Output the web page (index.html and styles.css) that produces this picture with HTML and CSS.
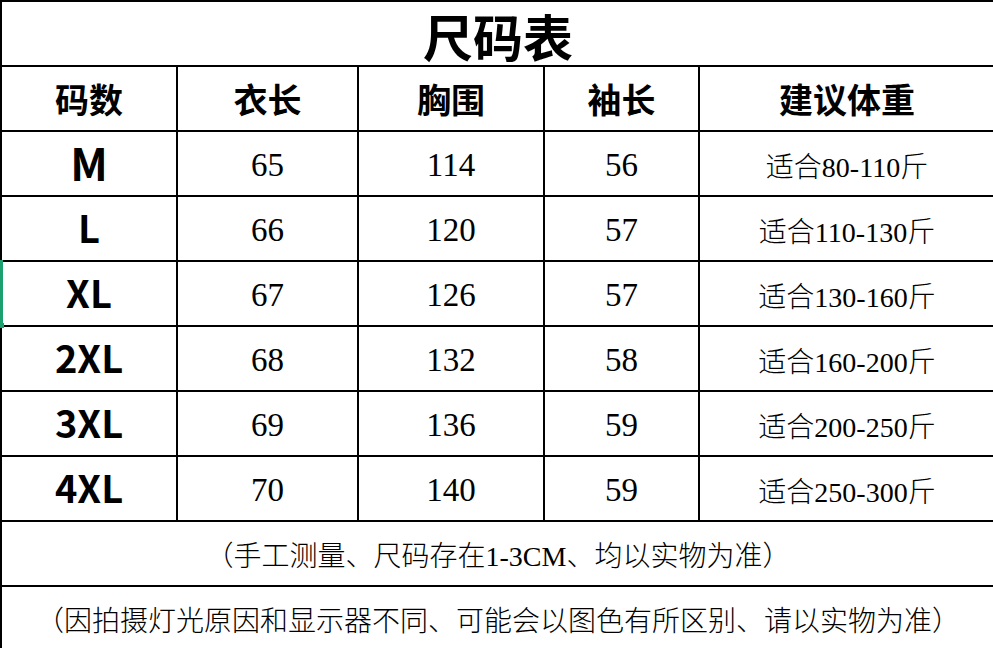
FILE: index.html
```html
<!DOCTYPE html>
<html lang="zh">
<head>
<meta charset="utf-8">
<title>尺码表</title>
<link rel="stylesheet" href="styles.css">
</head>
<body>
<div class="sheet">
  <div class="chart">
    <div class="cell title span">尺码表</div>

    <div class="cell head">码数</div>
    <div class="cell head">衣长</div>
    <div class="cell head">胸围</div>
    <div class="cell head">袖长</div>
    <div class="cell head">建议体重</div>

    <div class="cell size big">M</div>
    <div class="cell num">65</div>
    <div class="cell num">114</div>
    <div class="cell num">56</div>
    <div class="cell weight">适合80-110斤</div>

    <div class="cell size">L</div>
    <div class="cell num">66</div>
    <div class="cell num">120</div>
    <div class="cell num">57</div>
    <div class="cell weight">适合110-130斤</div>

    <div class="cell size">XL</div>
    <div class="cell num">67</div>
    <div class="cell num">126</div>
    <div class="cell num">57</div>
    <div class="cell weight">适合130-160斤</div>

    <div class="cell size">2XL</div>
    <div class="cell num">68</div>
    <div class="cell num">132</div>
    <div class="cell num">58</div>
    <div class="cell weight">适合160-200斤</div>

    <div class="cell size">3XL</div>
    <div class="cell num">69</div>
    <div class="cell num">136</div>
    <div class="cell num">59</div>
    <div class="cell weight">适合200-250斤</div>

    <div class="cell size">4XL</div>
    <div class="cell num">70</div>
    <div class="cell num">140</div>
    <div class="cell num">59</div>
    <div class="cell weight">适合250-300斤</div>

    <div class="cell note span">（手工测量、尺码存在1-3CM、均以实物为准）</div>
    <div class="cell note span">（因拍摄灯光原因和显示器不同、可能会以图色有所区别、请以实物为准）</div>
  </div>
  <div class="selection"><span class="handle"></span></div>
</div>
</body>
</html>
```

FILE: styles.css
```css
html, body {
  margin: 0;
  padding: 0;
  background: #ffffff;
  overflow: hidden;
}

.sheet {
  position: relative;
  width: 993px;
  height: 648px;
  overflow: hidden;
}

.chart {
  display: grid;
  grid-template-columns: 176px 181px 186px 155px 296px;
  grid-auto-rows: 65px;
  width: 996px;
  border-top: 2px solid #000;
  border-left: 2px solid #000;
  box-sizing: border-box;
  color: #000;
}

.cell {
  box-sizing: border-box;
  border-right: 2px solid #000;
  border-bottom: 2px solid #000;
  display: flex;
  align-items: center;
  justify-content: center;
  white-space: nowrap;
}

.span {
  grid-column: 1 / -1;
}

.title {
  font-family: "Noto Sans CJK SC", sans-serif;
  font-weight: 700;
  font-size: 50px;
  padding-top: 2px;
}

.head {
  font-family: "Noto Sans CJK SC", sans-serif;
  font-weight: 700;
  font-size: 34px;
}

.size {
  font-family: "Noto Sans CJK SC", sans-serif;
  font-weight: 700;
  font-size: 38px;
  padding-bottom: 4px;
}

.size.big {
  font-size: 44px;
}

.num {
  font-family: "Liberation Serif", serif;
  font-size: 33px;
  padding-top: 4px;
}

.weight {
  font-family: "Liberation Serif", "Noto Sans CJK SC", serif;
  font-weight: 300;
  font-size: 28px;
  padding-top: 2px;
}

.note {
  font-family: "Liberation Serif", "Noto Sans CJK SC", serif;
  font-weight: 300;
  font-size: 28px;
}

.selection {
  position: absolute;
  left: 0;
  top: 260px;
  width: 3px;
  height: 65px;
  background: #1d9f6f;
}

.handle {
  position: absolute;
  left: 0;
  bottom: -3px;
  width: 4px;
  height: 5px;
  background: #1d9f6f;
}
```
